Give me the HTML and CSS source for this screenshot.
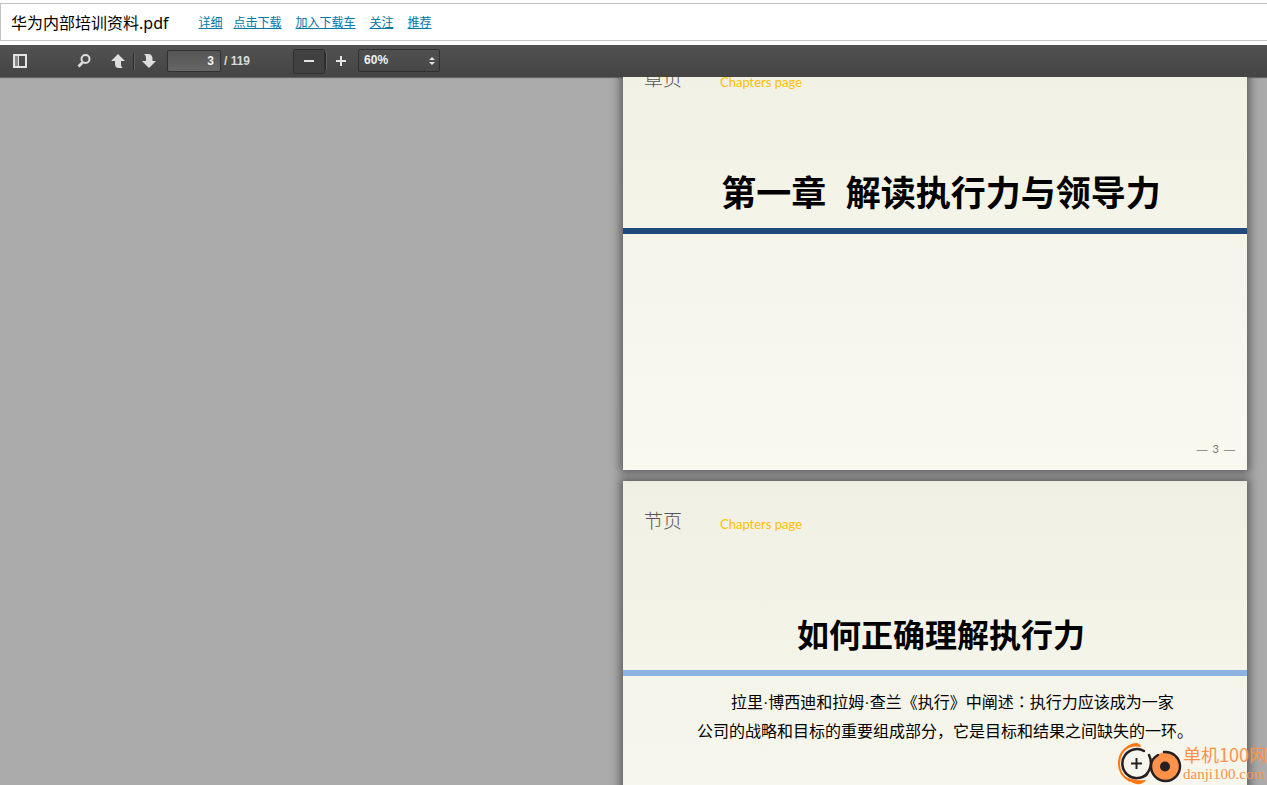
FILE: index.html
```html
<!DOCTYPE html>
<html lang="zh-CN">
<head>
<meta charset="utf-8">
<title>华为内部培训资料.pdf</title>
<link rel="stylesheet" href="styles.css">
</head>
<body>
<header class="file-bar">
  <h1 class="file-name">华为内部培训资料.pdf</h1>
  <nav class="file-links">
    <a class="first-link" href="#">详细</a>
    <a href="#">点击下载</a>
    <a href="#">加入下载车</a>
    <a href="#">关注</a>
    <a href="#">推荐</a>
  </nav>
</header>
<div class="toolbar">
  <button class="tool sidebar-toggle" type="button" aria-label="切换侧栏">
    <svg width="16" height="16" viewBox="0 0 16 16"><path fill="#e4e4e4" fill-rule="evenodd" d="M1 1h14v14H1zM3 3v10h10V3z"/><path fill="#888" d="M3 3h3v10H3z"/><path fill="#e4e4e4" d="M6 3h1v10H6z"/></svg>
  </button>
  <button class="tool find" type="button" aria-label="查找">
    <svg width="16" height="16" viewBox="0 0 16 16" fill="none" stroke="#dedede"><circle cx="9.500" cy="6" r="4" stroke-width="2"/><path d="M6.500 9.500L2.500 13.500" stroke-width="2.800"/></svg>
  </button>
  <button class="tool" type="button" aria-label="上一页">
    <svg width="16" height="16" viewBox="0 0 16 16"><path fill="#dedede" d="M9 1L16 8H12V11.500Q12 14 14 15H9Q6 14.500 6 11V8H2z"/></svg>
  </button>
  <span class="divider"></span>
  <button class="tool" type="button" aria-label="下一页">
    <svg width="16" height="16" viewBox="0 0 16 16"><path fill="#dedede" d="M8 15L15 8H11.500V5Q11 1.500 8 1H3Q5 2 5 4.500V8H1z"/></svg>
  </button>
  <input class="page-number" type="text" value="3" aria-label="页码">
  <span class="page-total">/ 119</span>
  <div class="zoom">
    <button class="tool zoom-out" type="button" aria-label="缩小">
      <svg width="12" height="12" viewBox="0 0 12 12"><path fill="#e4e4e4" d="M1 5h10v2H1z"/></svg>
    </button>
    <span class="divider"></span>
    <button class="tool zoom-in" type="button" aria-label="放大">
      <svg width="12" height="12" viewBox="0 0 12 12"><path fill="#e4e4e4" d="M1 5h4V1h2v4h4v2H7v4H5V7H1z"/></svg>
    </button>
    <div class="scale">
      <select class="scale-select" aria-label="缩放比例"><option>60%</option><option>100%</option></select>
      <svg class="scale-arrows" width="6" height="8" viewBox="0 0 6 8"><path fill="#e4e4e4" d="M3 0L6 3H0zM0 5h6L3 8z"/></svg>
    </div>
  </div>
</div>
<main class="viewer">
  <div class="pages">
    <section class="page chapter">
      <div class="page-head"><span class="page-kind">章页</span><span class="page-label">Chapters page</span></div>
      <h2 class="chapter-title">第一章&nbsp; 解读执行力与领导力</h2>
      <div class="page-foot"><span class="dash">—</span><span>3</span><span class="dash">—</span></div>
    </section>
    <section class="page topic">
      <div class="page-head"><span class="page-kind">节页</span><span class="page-label">Chapters page</span></div>
      <h2 class="topic-title">如何正确理解执行力</h2>
      <p class="topic-text">拉里·博西迪和拉姆·查兰《执行》中阐述<span class="mid-colon" lang="zh-TW">：</span>执行力应该成为一家<br>公司的战略和目标的重要组成部分，它是目标和结果之间缺失的一环。</p>
    </section>
  </div>
  <div class="site-mark">
    <svg width="64" height="44" viewBox="0 0 64 44" fill="none">
      <path d="M12 5Q1 10 1 23Q1 34 12 40" stroke="#ff7612" stroke-width="2"/>
      <path d="M6 9Q11 2 18 2Q22 2 23 6Q14 4 6 9zM6 35Q14 40 28 39Q25 44 18 43Q11 41 6 35z" fill="#ff7612"/>
      <path d="M26 10A14.500 14.500 0 1 0 29 33" stroke="#272022" stroke-width="2.500" stroke-linecap="round"/>
      <path d="M18.500 17v11M13 22.500h11" stroke="#272022" stroke-width="2"/>
      <circle cx="47" cy="25.500" r="14" fill="#ff914b"/>
      <path d="M46 11A14.500 14.500 0 1 1 33 25Q33 18 40 14" stroke="#272022" stroke-width="2.500" stroke-linecap="round"/>
      <path d="M31 14Q36 24 28 34" stroke="#272022" stroke-width="2.500" stroke-linecap="round"/>
      <circle cx="47" cy="25.500" r="5" fill="#272022"/>
    </svg>
    <div class="mark-text"><span class="mark-name">单机100网</span><span class="mark-url">danji100.com</span></div>
  </div>
</main>
</body>
</html>
```
FILE: styles.css
```css
* { box-sizing: border-box; }
html, body { height: 100%; }
body {
  margin: 0;
  padding-top: 3px;
  display: flex;
  flex-direction: column;
  overflow: hidden;
  background: #fff;
  color: #000;
  font-family: "Liberation Sans", "Noto Sans CJK SC", sans-serif;
}
.file-bar {
  flex: none;
  display: flex;
  align-items: center;
  height: 38px;
  margin-bottom: 4px;
  padding: 2px 0 0 10px;
  border: 1px solid #c3c3c3;
  border-right: 0;
}
.file-name {
  margin: 0 30px 0 0;
  font: 400 16px/24px "Noto Sans", "Noto Sans CJK SC", sans-serif;
}
.file-links { display: flex; gap: 14px; font-size: 12px; line-height: 16px; }
.file-links a { color: #0078a8; text-decoration: underline; }
.file-links .first-link { margin-right: -3px; }

.toolbar {
  flex: none;
  display: flex;
  align-items: center;
  height: 32px;
  padding: 0 4px;
  position: relative;
  background: linear-gradient(#525252, #444);
  box-shadow: 0 1px 1px rgba(0, 0, 0, .4);
  color: #d9d9d9;
  font-size: 12px;
  font-weight: 700;
}
.tool {
  display: flex;
  align-items: center;
  justify-content: center;
  width: 32px;
  height: 25px;
  padding: 0;
  border: 1px solid transparent;
  background: none;
}
.find { margin: 0 1px 0 32px; }
.divider { width: 1px; height: 17px; background: #2b2b2b; box-shadow: 1px 0 #606060; }
.divider + .tool { width: 30px; }
.page-number {
  width: 54px;
  height: 22px;
  margin-left: 3px;
  padding: 0 6px;
  border: 1px solid #303030;
  border-radius: 2px;
  background: linear-gradient(#555, #666);
  color: #f2f2f2;
  font: inherit;
  text-align: right;
}
.page-total { margin-left: 3px; }
.zoom { display: flex; align-items: center; margin-left: 43px; }
.zoom-out { border-color: #303030; background: #414141; border-radius: 2px; }
.scale { position: relative; margin: 0 0 2px 2px; }
.scale-select {
  display: block;
  appearance: none;
  width: 82px;
  height: 23px;
  padding: 0 5px;
  border: 1px solid #303030;
  border-radius: 2px;
  background: linear-gradient(#505050, #474747);
  color: #f0f0f0;
  font: inherit;
}
.scale-arrows { position: absolute; right: 5px; top: 8px; pointer-events: none; }

.viewer {
  flex: 1;
  min-height: 0;
  overflow: hidden;
  display: flex;
  justify-content: flex-end;
  align-items: flex-start;
  padding-right: 20px;
  background: #ababab;
}
.pages {
  flex: none;
  display: flex;
  flex-direction: column;
  gap: 11px;
  width: 624px;
  margin-top: -38px;
}
.page {
  display: flex;
  flex-direction: column;
  min-height: 431px;
  background: linear-gradient(#f0f0e4, #f9f9f0);
  box-shadow: 0 0 9px 3px #5c5c5c;
}
/* keeps the lower sheet's shadow off the upper sheet */
.chapter { position: relative; z-index: 1; }
.page-head {
  display: flex;
  align-items: center;
  gap: 38px;
  padding: 26px 21px 0;
  line-height: 30px;
}
.page-kind { color: #555; font-size: 19px; font-weight: 300; }
.page-label { padding-top: 4px; color: #ffc000; font: 400 13px/26px Lato, sans-serif; }
.chapter-title, .topic-title {
  margin: 69px 0 0;
  padding: 0 0 4px 12px;
  text-align: center;
  line-height: 60px;
}
.chapter-title { border-bottom: 6px solid #1f497d; font-size: 35px; }
.topic-title { border-bottom: 6px solid #8db3e2; font-size: 32px; }
.page-foot {
  display: flex;
  gap: 5px;
  margin-top: auto;
  padding: 0 12px 13px;
  justify-content: flex-end;
  color: #777;
  font: 11px/16px Lato, sans-serif;
}
.dash { font-family: "Liberation Sans", sans-serif; }
.topic-text {
  margin: 11px 0 0;
  padding-left: 74px;
  font-size: 16px;
  line-height: 29px;
  text-indent: 34px;
  white-space: nowrap;
}
.mid-colon { font-family: "Noto Sans CJK TC", sans-serif; }

.site-mark {
  position: absolute;
  z-index: 2;
  right: 0;
  bottom: 0;
  display: flex;
  gap: 1px;
  width: 149px;
  color: #ff914b;
}
.site-mark svg { flex: none; }
.mark-text { display: flex; flex-direction: column; padding-top: 2px; white-space: nowrap; }
.mark-name { font: 18px/23px "Noto Sans CJK SC", sans-serif; }
.mark-url { font: 15px/17px "Liberation Serif", serif; }
```
